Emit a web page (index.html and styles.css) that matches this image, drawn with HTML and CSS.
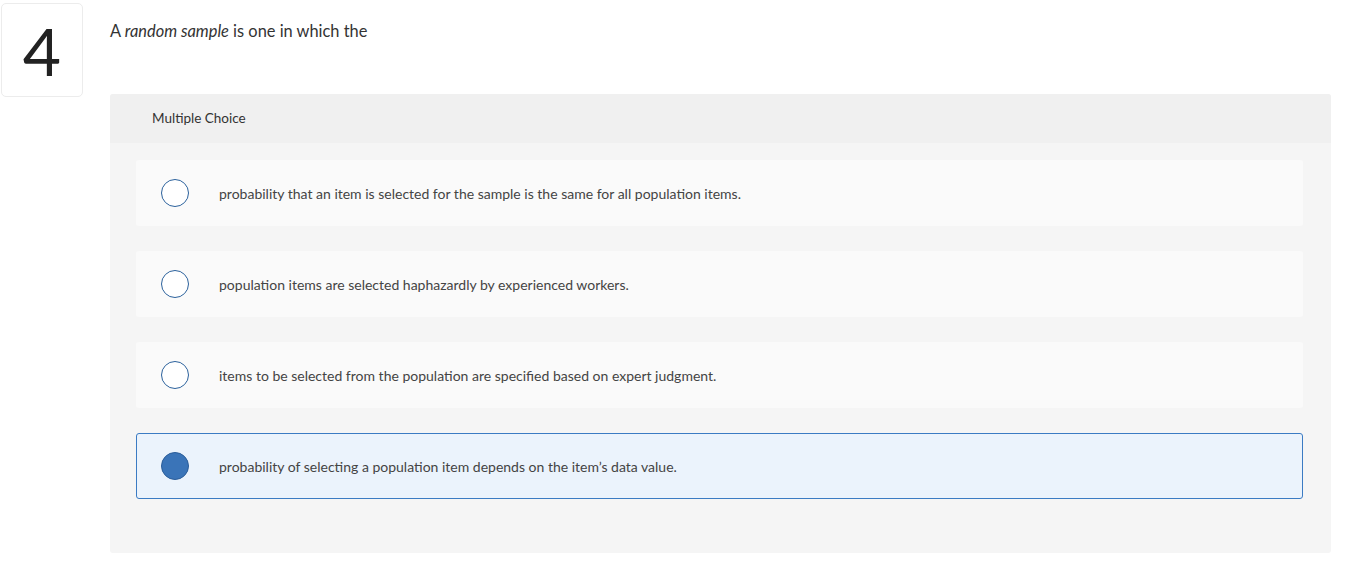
FILE: index.html
```html
<!DOCTYPE html>
<html lang="en">
<head>
    <meta charset="UTF-8">
    <title>Question 4</title>
    <link rel="stylesheet" href="styles.css">
</head>
<body>
    <div class="question-row">
        <div class="question-number">4</div>
        <div class="question-body">
            <div class="prompt">A <em>random sample</em> is one in which the</div>

            <div class="answer-panel">
                <div class="panel-header">Multiple Choice</div>
                <div class="choices">
                    <div class="choice">
                        <span class="radio"></span>
                        <span class="choice-text">probability that an item is selected for the sample is the same for all population items.</span>
                    </div>
                    <div class="choice">
                        <span class="radio"></span>
                        <span class="choice-text">population items are selected haphazardly by experienced workers.</span>
                    </div>
                    <div class="choice">
                        <span class="radio"></span>
                        <span class="choice-text">items to be selected from the population are specified based on expert judgment.</span>
                    </div>
                    <div class="choice selected">
                        <span class="radio"></span>
                        <span class="choice-text">probability of selecting a population item depends on the item’s data value.</span>
                    </div>
                </div>
            </div>
        </div>
    </div>
</body>
</html>
```

FILE: styles.css
```css
body {
    margin: 0;
    font-family: Lato, "Open Sans", Arial, sans-serif;
    background-color: #fff;
    color: #333;
}
.question-row {
    display: flex;
    align-items: flex-start;
    padding-top: 3px;
    width: 1331px;
}
.question-number {
    width: 80px;
    height: 92px;
    margin-left: 1px;
    flex-shrink: 0;
    border: 1px solid #ececec;
    border-radius: 5px;
    display: flex;
    align-items: center;
    justify-content: center;
    font-size: 66px;
    font-weight: 400;
    color: #222;
}
.question-body {
    flex: 1;
    margin-left: 27px;
}
.prompt {
    font-size: 16.4px;
    color: #333;
    padding-top: 18px;
    height: 91px;
    box-sizing: border-box;
}
.answer-panel {
    background-color: #f5f5f5;
    border-radius: 3px;
    padding-bottom: 54px;
}
.panel-header {
    background-color: #f0f0f0;
    height: 49px;
    line-height: 49px;
    padding-left: 42px;
    font-size: 13.5px;
    color: #333;
    border-radius: 3px 3px 0 0;
}
.choices {
    display: flex;
    flex-direction: column;
    gap: 25px;
    padding: 17px 28px 0 26px;
}
.choice {
    display: flex;
    align-items: center;
    height: 66px;
    background-color: #fafafa;
    border: 1px solid transparent;
    border-radius: 3px;
    box-sizing: border-box;
    padding-left: 24px;
}
.radio {
    width: 28px;
    height: 28px;
    border: 1.5px solid #2b619c;
    border-radius: 50%;
    background-color: #fff;
    box-sizing: border-box;
    flex-shrink: 0;
}
.choice-text {
    margin-left: 30px;
    font-size: 14px;
    color: #444;
}
.choice.selected {
    background-color: #ebf3fc;
    border-color: #3b7bc3;
}
.choice.selected .radio {
    background-color: #3a74b8;
    border: 1px solid #2a5d99;
}
```
